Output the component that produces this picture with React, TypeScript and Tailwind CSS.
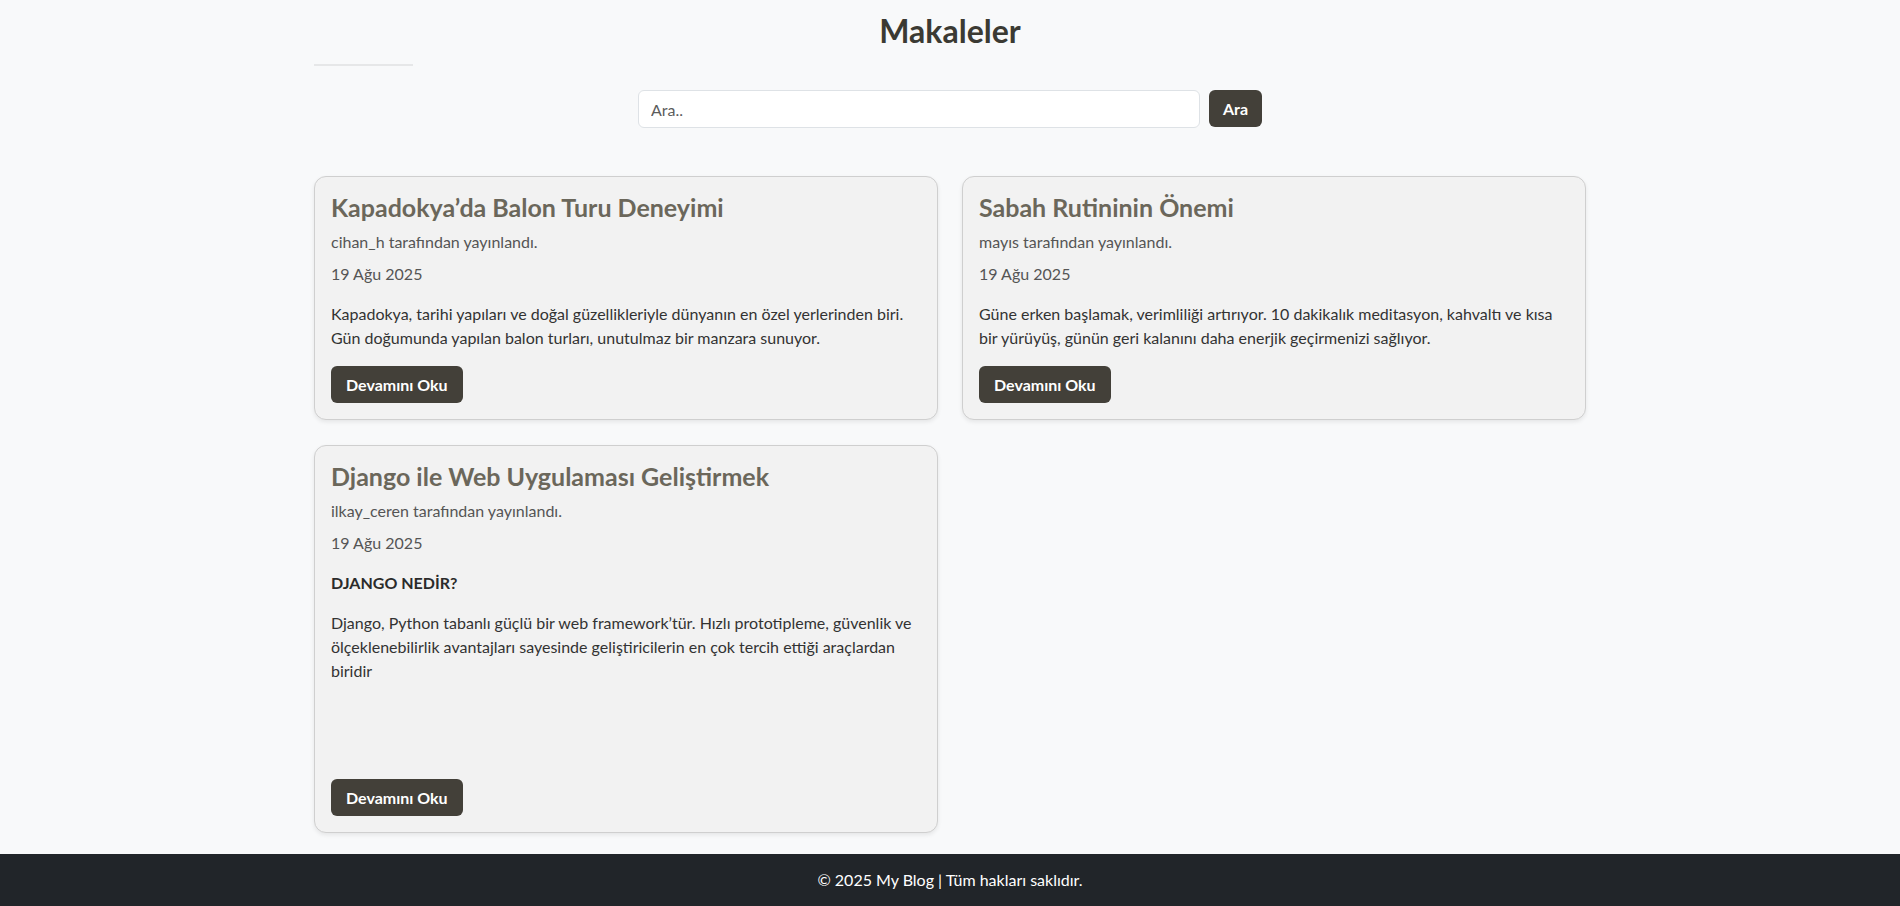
import React from "react";

const font = { fontFamily: '"Segoe UI", Lato, "Noto Sans", sans-serif' };

type Post = {
  title: string;
  author: string;
  date: string;
  body: React.ReactNode;
};

const posts: Post[] = [
  {
    title: "Kapadokya’da Balon Turu Deneyimi",
    author: "cihan_h",
    date: "19 Ağu 2025",
    body: (
      <p className="mb-4">
        Kapadokya, tarihi yapıları ve doğal güzellikleriyle dünyanın en özel yerlerinden biri. Gün doğumunda yapılan balon turları, unutulmaz bir manzara sunuyor.
      </p>
    ),
  },
  {
    title: "Sabah Rutininin Önemi",
    author: "mayıs",
    date: "19 Ağu 2025",
    body: (
      <p className="mb-4">
        Güne erken başlamak, verimliliği artırıyor. 10 dakikalık meditasyon, kahvaltı ve kısa bir yürüyüş, günün geri kalanını daha enerjik geçirmenizi sağlıyor.
      </p>
    ),
  },
  {
    title: "Django ile Web Uygulaması Geliştirmek",
    author: "ilkay_ceren",
    date: "19 Ağu 2025",
    body: (
      <>
        <p className="mb-4 font-bold text-[#2b2b2b]">DJANGO NEDİR?</p>
        <p className="mb-4">
          Django, Python tabanlı güçlü bir web framework’tür. Hızlı prototipleme, güvenlik ve ölçeklenebilirlik avantajları sayesinde geliştiricilerin en çok tercih ettiği araçlardan biridir
        </p>
        <p className="mb-4">&nbsp;</p>
        <p className="mb-4">&nbsp;</p>
      </>
    ),
  },
];

function Card({ post }: { post: Post }) {
  return (
    <div className="flex flex-col rounded-[12px] border border-[#cfcfcf] bg-[#f2f2f2] p-4 shadow-[0_2px_4px_rgba(0,0,0,0.08)]">
      <h4 className="mb-2 text-[25px] font-bold leading-[29px] text-[#6b675b]">{post.title}</h4>
      <p className="mb-2 text-[#555555]">{post.author} tarafından yayınlandı.</p>
      <p className="mb-4 text-[#555555]">{post.date}</p>
      <div className="text-[#333333]">{post.body}</div>
      <div className="mt-auto">
        <button className="h-[37px] rounded-[6px] bg-[#434039] px-[15px] font-bold text-white">
          Devamını Oku
        </button>
      </div>
    </div>
  );
}

export default function App() {
  return (
    <div style={font} className="flex min-h-[906px] flex-col bg-[#f8f9fa] text-[16px] leading-[24px] text-[#333]">
      <main className="mx-auto w-[1272px] flex-1 pb-5">
        <h1 className="pt-[12px] text-center text-[32px] font-bold leading-[38px] text-[#3b3a33]">Makaleler</h1>
        <div className="mt-[14px] h-[2px] w-[99px] bg-[#e6e7e8]" />
        <form className="mx-auto mt-[24px] flex w-[624px] gap-[9px]" onSubmit={(e) => e.preventDefault()}>
          <input
            type="text"
            placeholder="Ara.."
            className="h-[38px] flex-1 rounded-[6px] border border-[#dee2e6] bg-white px-3 text-[#333] placeholder:text-[#5c5c5c] outline-none"
          />
          <button className="h-[37px] w-[53px] rounded-[6px] bg-[#434039] font-bold text-white">Ara</button>
        </form>
        <div className="mt-[48px] grid grid-cols-2 gap-x-[24px] gap-y-[25px]">
          {posts.map((p) => (
            <Card key={p.title} post={p} />
          ))}
        </div>
      </main>
      <footer className="bg-[#212529] py-[14px] text-center text-white">
        © 2025 My Blog | Tüm hakları saklıdır.
      </footer>
    </div>
  );
}
